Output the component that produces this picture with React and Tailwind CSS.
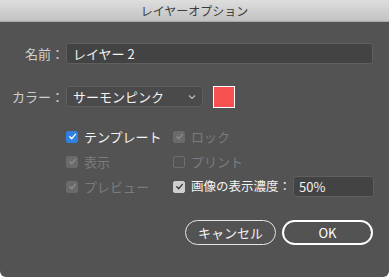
import React from 'react';

const font = { fontFamily: '"Noto Sans CJK JP", "Noto Sans", sans-serif' };

function Check({ checked, variant = 'disabled' }) {
  const box =
    variant === 'blue'
      ? 'bg-[#2f80e0] border-[#2f80e0]'
      : variant === 'light'
      ? 'bg-[#cfcfcf] border-[#cfcfcf]'
      : checked
      ? 'bg-[#6a6a6a] border-[#6a6a6a]'
      : 'bg-transparent border-[#6e6e6e]';
  const stroke = variant === 'blue' ? '#ffffff' : variant === 'light' ? '#3a3a3a' : '#8c8c8c';
  return (
    <span className={`w-3 h-3 rounded-[2px] border flex items-center justify-center shrink-0 ${box}`}>
      {checked && (
        <svg width="9" height="9" viewBox="0 0 10 10">
          <path d="M2 5.2 L4.2 7.4 L8.2 2.6" fill="none" stroke={stroke} strokeWidth="1.6" strokeLinecap="round" strokeLinejoin="round" />
        </svg>
      )}
    </span>
  );
}

function Option({ checked, variant, label, disabled }) {
  return (
    <div className="flex items-center gap-[6px] h-[25px]">
      <Check checked={checked} variant={variant} />
      <span className={`text-[13px] ${disabled ? 'text-[#7c7c7c]' : 'text-[#f2f2f2]'}`}>{label}</span>
    </div>
  );
}

export default function App() {
  return (
    <div className="w-[389px] h-[277px] bg-white" style={font}>
      <div className="w-full h-full bg-[#535353] rounded-b-[6px] overflow-hidden flex flex-col">
        <div className="h-[22px] bg-gradient-to-b from-[#dedede] to-[#c2c2c2] border-b border-[#a8a8a8] flex items-center justify-center text-[12px] text-[#3c3c3c]">
          レイヤーオプション
        </div>

        <div className="flex items-center mt-[21px] h-[21px]">
          <span className="w-[66px] pr-[2px] text-right text-[13px] text-[#cfcfcf]">名前：</span>
          <div className="w-[307px] h-[21px] bg-[#434343] border border-[#5f5f5f] rounded-[3px] flex items-center px-[6px] text-[13px] text-[#f2f2f2]">
            レイヤー&nbsp;2
          </div>
        </div>

        <div className="flex items-center mt-[22px] h-[21px]">
          <span className="w-[66px] pr-[2px] text-right text-[13px] text-[#cfcfcf]">カラー：</span>
          <div className="w-[137px] h-[21px] bg-[#4a4a4a] border border-[#5f5f5f] rounded-[3px] flex items-center justify-between px-[6px] text-[13px] text-[#f2f2f2]">
            <span>サーモンピンク</span>
            <svg width="8" height="6" viewBox="0 0 8 6">
              <path d="M1 1.5 L4 4.5 L7 1.5" fill="none" stroke="#bdbdbd" strokeWidth="1.2" />
            </svg>
          </div>
          <div className="ml-[10px] w-[22px] h-[22px] bg-[#f65050] border border-white" />
        </div>

        <div className="flex mt-[17px] pl-[66px]">
          <div className="w-[107px] flex flex-col">
            <Option checked variant="blue" label="テンプレート" />
            <Option checked disabled label="表示" />
            <Option checked disabled label="プレビュー" />
          </div>
          <div className="flex flex-col">
            <Option checked disabled label="ロック" />
            <Option disabled label="プリント" />
            <div className="flex items-center gap-[6px] h-[25px]">
              <Check checked variant="light" />
              <span className="text-[12.5px] text-[#f2f2f2]">画像の表示濃度：</span>
              <div className="w-[81px] h-[21px] bg-[#434343] border border-[#5f5f5f] rounded-[3px] flex items-center px-[5px] text-[13px] text-[#f2f2f2] ml-[-4px]">
                50%
              </div>
            </div>
          </div>
        </div>

        <div className="flex justify-end gap-[6px] pr-[16px] mt-[21px]">
          <button className="w-[91px] h-[25px] rounded-full border border-[#e6e6e6] text-[13px] text-[#f2f2f2] flex items-center justify-center">
            キャンセル
          </button>
          <button className="w-[91px] h-[25px] rounded-full border-2 border-white text-[13px] text-white flex items-center justify-center">
            OK
          </button>
        </div>
      </div>
    </div>
  );
}
